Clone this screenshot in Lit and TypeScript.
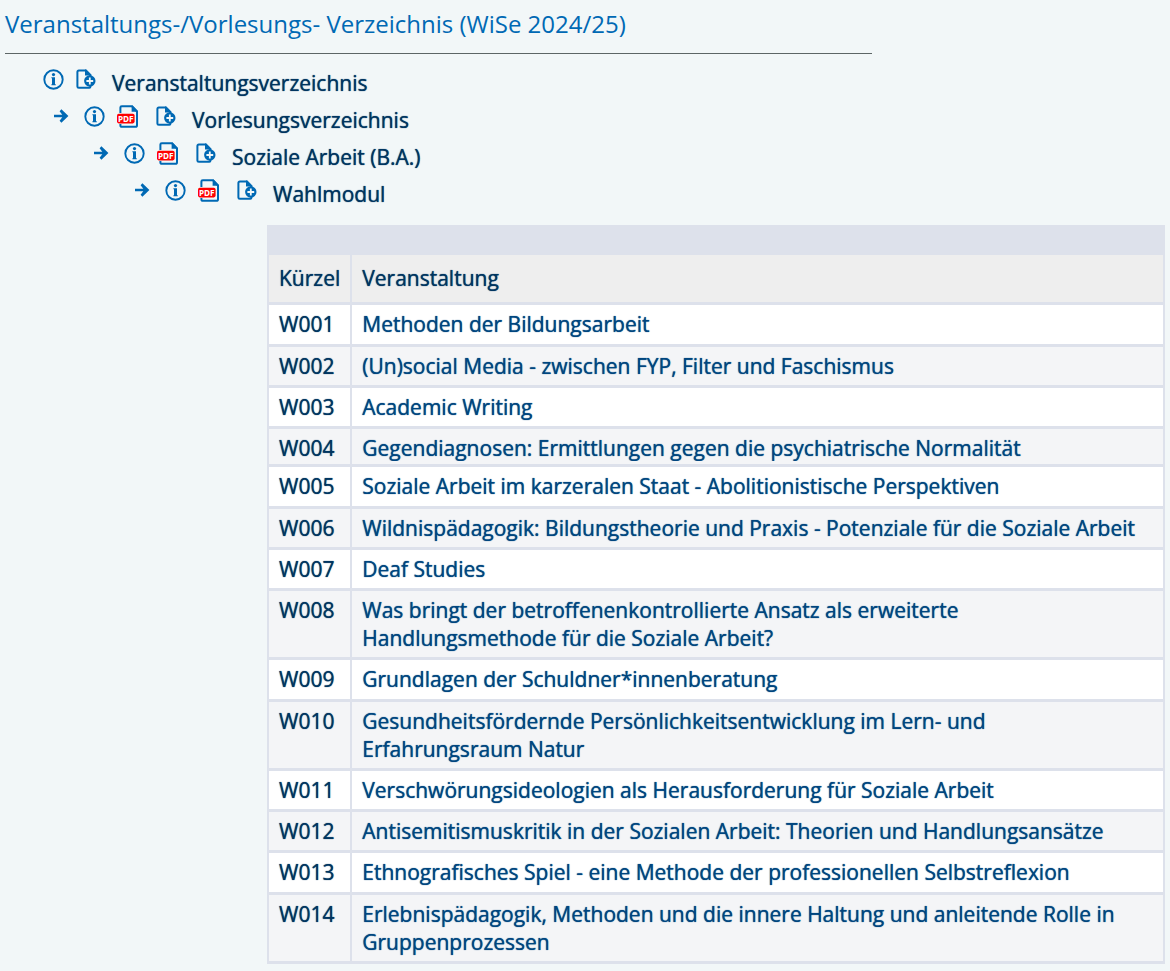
import { LitElement, html, css, svg } from "lit";
import { customElement } from "lit/decorators.js";

interface TreeNode {
  label: string;
  pdf: boolean;
}

interface Course {
  code: string;
  title: string;
  clipped?: boolean;
}

const NODES: TreeNode[] = [
  { label: "Veranstaltungsverzeichnis", pdf: false },
  { label: "Vorlesungsverzeichnis", pdf: true },
  { label: "Soziale Arbeit (B.A.)", pdf: true },
  { label: "Wahlmodul", pdf: true },
];

const COURSES: Course[] = [
  { code: "W001", title: "Methoden der Bildungsarbeit" },
  { code: "W002", title: "(Un)social Media - zwischen FYP, Filter und Faschismus" },
  { code: "W003", title: "Academic Writing" },
  { code: "W004", title: "Gegendiagnosen: Ermittlungen gegen die psychiatrische Normalität", clipped: true },
  { code: "W005", title: "Soziale Arbeit im karzeralen Staat - Abolitionistische Perspektiven" },
  { code: "W006", title: "Wildnispädagogik: Bildungstheorie und Praxis - Potenziale für die Soziale Arbeit" },
  { code: "W007", title: "Deaf Studies" },
  { code: "W008", title: "Was bringt der betroffenenkontrollierte Ansatz als erweiterte Handlungsmethode für die Soziale Arbeit?" },
  { code: "W009", title: "Grundlagen der Schuldner*innenberatung" },
  { code: "W010", title: "Gesundheitsfördernde Persönlichkeitsentwicklung im Lern- und Erfahrungsraum Natur" },
  { code: "W011", title: "Verschwörungsideologien als Herausforderung für Soziale Arbeit" },
  { code: "W012", title: "Antisemitismuskritik in der Sozialen Arbeit: Theorien und Handlungsansätze" },
  { code: "W013", title: "Ethnografisches Spiel - eine Methode der professionellen Selbstreflexion" },
  { code: "W014", title: "Erlebnispädagogik, Methoden und die innere Haltung und anleitende Rolle in Gruppenprozessen" },
];

const arrowIcon = svg`<svg width="16" height="16" viewBox="0 0 16 16" aria-hidden="true">
  <path d="M1 6.7H9.3L6.6 3.2L8.4 1.2L15.4 8L8.4 14.8L6.6 12.8L9.3 9.3H1Z" fill="#0069b4"/></svg>`;

const infoIcon = svg`<svg width="21" height="21" viewBox="0 0 21 21" aria-hidden="true">
  <circle cx="10.5" cy="10.5" r="9.2" fill="none" stroke="#0069b4" stroke-width="1.9"/>
  <circle cx="10.5" cy="5.6" r="1.6" fill="#0069b4"/>
  <path d="M8.4 8.2H12V15.2H12.8V16.2H8.4V15.2H9V9.2H8.4Z" fill="#0069b4"/></svg>`;

const pdfIcon = svg`<svg width="22" height="23" viewBox="0 0 22 23" aria-hidden="true">
  <path d="M3.4 8V2.6Q3.4 1.2 4.8 1.2H15L20 6.5V20.2Q20 21.8 18.4 21.8H5Q3.4 21.8 3.4 20.4V19" fill="none" stroke="#0069b4" stroke-width="2"/>
  <path d="M14.6 1V6.8H20.8V6L15.5 .4Z" fill="#0069b4"/>
  <rect x="0" y="8.8" width="17.6" height="9.6" rx="1.8" fill="#f00"/>
  <text x="8.8" y="16.5" text-anchor="middle" font-family="Noto Sans, sans-serif" font-size="8.2" font-weight="700" fill="#fff">PDF</text></svg>`;

const addIcon = svg`<svg width="20" height="21" viewBox="0 0 20 21" aria-hidden="true">
  <path d="M14.4 7V6.2L9.8 1.5H2.8Q1.4 1.5 1.4 2.9V17.4Q1.4 18.8 2.8 18.8H13.4Q14.4 18.8 14.4 17.8V17" fill="none" stroke="#0069b4" stroke-width="2"/>
  <path d="M9 .6V6.6H15.4V5.8L10.2 .6Z" fill="#0069b4"/>
  <circle cx="13.8" cy="12" r="5.7" fill="#0069b4"/>
  <path d="M13.8 8.6V15.4M10.4 12H17.2" stroke="#f2f7f8" stroke-width="1.8"/></svg>`;

@customElement("app-root")
export class AppRoot extends LitElement {
  static styles = css`
    :host {
      display: block;
      box-sizing: border-box;
      min-height: 100vh;
      padding: 6px 5px 7px;
      background: #f2f7f8;
      color: #003560;
      font: 400 21px/28px "Open Sans", sans-serif;
    }
    a {
      color: inherit;
      text-decoration: none;
    }
    .title {
      box-sizing: border-box;
      width: calc(75% - 3px);
      margin: 0;
      padding-bottom: 12px;
      border-bottom: 1px solid #5d6666;
      color: #0069b4;
      font-size: 24px;
      font-weight: 400;
      line-height: 35px;
    }
    .tree {
      margin: 0;
      padding: 9px 0 0 38px;
      list-style: none;
    }
    .node {
      display: flex;
      align-items: center;
      height: 37px;
    }
    .level-1 { padding-left: 10px; }
    .level-2 { padding-left: 50px; }
    .level-3 { padding-left: 91px; }
    .icons {
      display: flex;
      align-items: center;
      padding-bottom: 5px;
    }
    .icon {
      display: flex;
    }
    .arrow { margin-right: 15px; }
    .info { margin-right: 12px; }
    .pdf { margin-right: 17px; }
    .add { margin-right: 16px; }
    .label {
      padding-top: 2px;
    }
    .label,
    .courses {
      text-shadow: 0 0 1px currentColor;
    }
    .courses {
      width: calc(100% - 262px);
      margin: 14px 0 0 262px;
      border-spacing: 2px 3px;
      background: #dde1eb;
    }
    th, td {
      padding: 5px 10px;
      text-align: left;
      vertical-align: top;
      font-weight: 400;
    }
    .band {
      height: 24px;
      padding: 0;
    }
    .heads th {
      padding: 9px 10px 10px;
      background: #eee;
    }
    .heads .code-col {
      width: 61px;
    }
    .row {
      background: #fff;
    }
    .row:nth-child(even) {
      background: #f4f5f7;
    }
    .row td {
      padding-right: 16px;
    }
    .row:nth-child(4n + 1) td,
    .row:nth-child(4n + 1) th {
      padding-bottom: 6px;
    }
    .course {
      display: block;
      color: #00467f;
    }
    .clipped td,
    .clipped th {
      padding-bottom: 2px;
    }
    .clipped .course {
      height: 27px;
      overflow: hidden;
    }
  `;

  private renderNode(node: TreeNode, level: number) {
    return html`<li class="node level-${level}">
      <span class="icons">
        ${level ? html`<span class="icon arrow">${arrowIcon}</span>` : ""}
        <a class="icon info" href="#" aria-label="Info: ${node.label}">${infoIcon}</a>
        ${node.pdf ? html`<a class="icon pdf" href="#" aria-label="PDF: ${node.label}">${pdfIcon}</a>` : ""}
        <a class="icon add" href="#" aria-label="Hinzufügen: ${node.label}">${addIcon}</a>
      </span>
      <a class="label" href="#">${node.label}</a>
    </li>`;
  }

  render() {
    return html`
      <h1 class="title">Veranstaltungs-/Vorlesungs- Verzeichnis (WiSe 2024/25)</h1>
      <ul class="tree">
        ${NODES.map((node, i) => this.renderNode(node, i))}
      </ul>
      <table class="courses">
        <thead>
          <tr><td class="band" colspan="2"></td></tr>
          <tr class="heads">
            <th class="code-col" scope="col">Kürzel</th>
            <th scope="col">Veranstaltung</th>
          </tr>
        </thead>
        <tbody>
          ${COURSES.map(
            (c) => html`<tr class="row ${c.clipped ? "clipped" : ""}">
              <th scope="row">${c.code}</th>
              <td><a class="course" href="#">${c.title}</a></td>
            </tr>`
          )}
        </tbody>
      </table>
    `;
  }
}
